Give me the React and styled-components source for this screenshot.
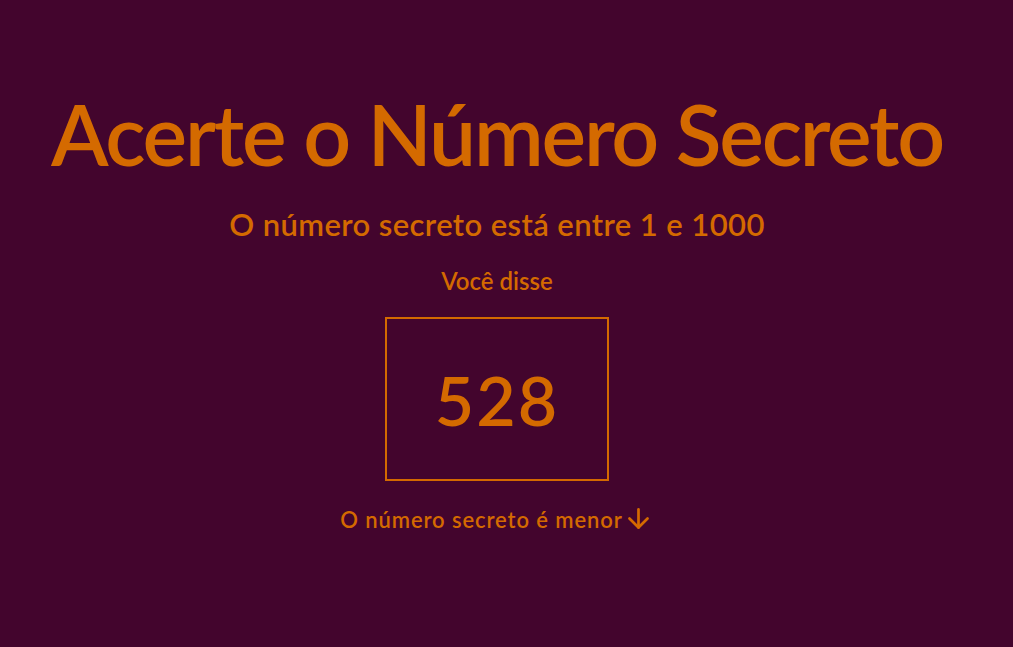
import React from 'react';
import styled, { createGlobalStyle } from 'styled-components';
import { ArrowDown } from 'lucide-react';

const GlobalStyle = createGlobalStyle`
  * { box-sizing: border-box; }
  html, body {
    margin: 0;
    padding: 0;
    background: #43052d;
    font-family: Lato, "Noto Sans", sans-serif;
  }
`;

const Main = styled.main`
  min-height: 647px;
  display: flex;
  flex-direction: column;
  align-items: center;
  padding: 92px 19px 0 0;
  color: #d46a00;
`;

const Title = styled.h1`
  margin: 0;
  font-size: 84px;
  font-weight: 600;
  line-height: 1;
  letter-spacing: -2.2px;
`;

const Subtitle = styled.h3`
  margin: 33px 0 0;
  font-size: 31px;
  font-weight: 600;
  line-height: 1;
  letter-spacing: 0.4px;
`;

const Said = styled.p`
  margin: 29px 0 0;
  font-size: 24px;
  font-weight: 600;
  line-height: 1;
`;

const Guess = styled.div`
  margin-top: 24px;
  width: 224px;
  height: 164px;
  border: 2px solid #d46a00;
  display: flex;
  align-items: center;
  justify-content: center;
  font-size: 68px;
  font-weight: 600;
  letter-spacing: 2px;
`;

const Hint = styled.p`
  margin: 24px 0 0;
  display: flex;
  align-items: center;
  font-size: 22px;
  font-weight: 600;
  line-height: 1;
  letter-spacing: 0.9px;

  svg {
    margin-left: 0;
    margin-top: -2px;
  }
`;

export default function App() {
  return (
    <>
      <GlobalStyle />
      <Main>
        <Title>Acerte o Número Secreto</Title>
        <Subtitle>O número secreto está entre 1 e 1000</Subtitle>
        <Said>Você disse</Said>
        <Guess>528</Guess>
        <Hint>
          O número secreto é menor
          <ArrowDown size={31} strokeWidth={2.1} />
        </Hint>
      </Main>
    </>
  );
}
